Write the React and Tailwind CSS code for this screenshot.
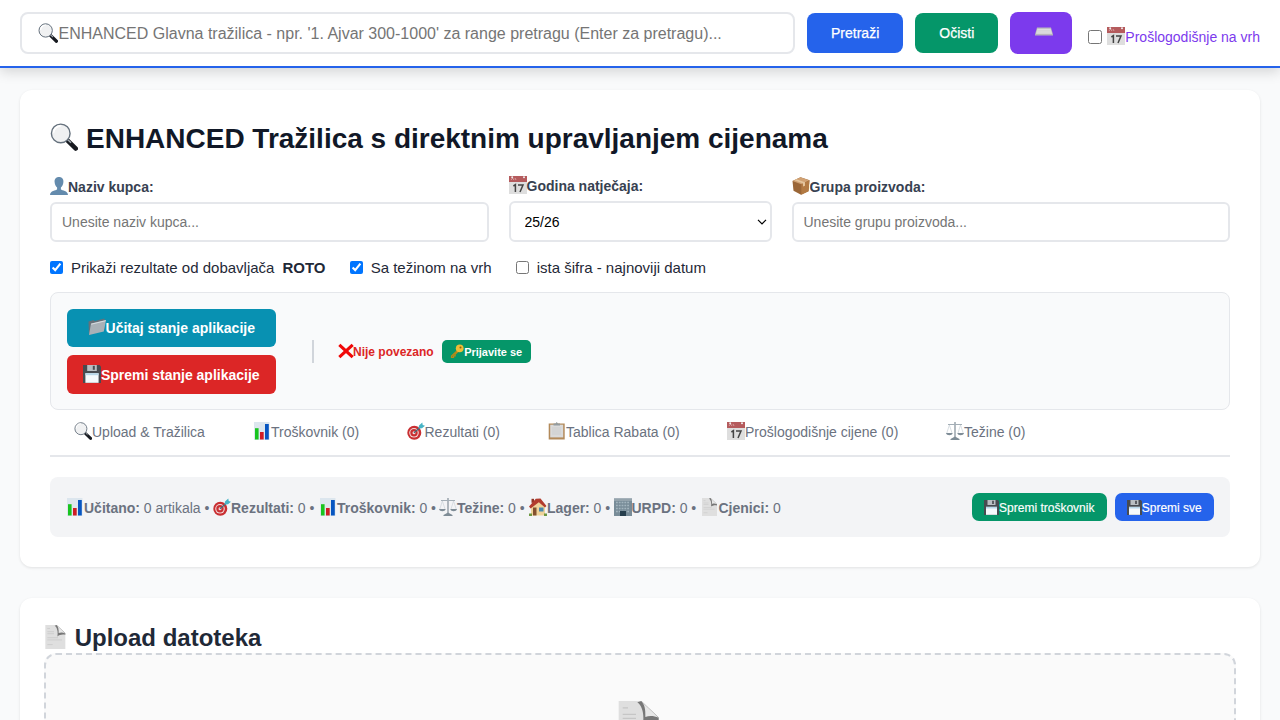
import React from "react";

const art = {
  search: (
    <>
      <path d="M11.2 11.2 16.6 16.4" stroke="#171a20" strokeWidth="2.9" strokeLinecap="round" />
      <path d="m11.5 10.8 2 1.9" stroke="#a6adb4" strokeWidth="1" />
      <circle cx="6.9" cy="6.7" r="6" fill="#f0f1f2" stroke="#65717d" strokeWidth=".9" />
      <path d="M2.3 6.3a4.6 4.6 0 0 1 4.6-4.5" stroke="#fff" strokeWidth="1.1" fill="none" />
    </>
  ),
  calendar: (
    <>
      <path d="M0 0h18v18H0z" fill="#dedede" />
      <path d="M0 0h18v6H0z" fill="#b55b5d" />
      <path d="m2 4 1.5-2L5 4m1-2 1 2" stroke="#e5b6b6" strokeWidth=".7" fill="none" />
      <circle cx="3.2" cy="1.2" r="1" fill="#eee" />
      <circle cx="15" cy="1.2" r="1" fill="#eee" />
      <path d="m4.4 10 2-1.3V16M9 9h5l-3 7" stroke="#444" strokeWidth="1.5" fill="none" />
    </>
  ),
  user: (
    <path d="M9 0C5.9 0 4.3 2.2 4.6 5c.2 2.4 1.1 4.2 2.5 5.4v2C5.9 13.4.2 13.5 0 18h18c-.2-4.5-5.9-4.6-7.100-5.600v-2C12.300 9.200 13.200 7.400 13.400 5 13.700 2.200 12.100 0 9 0Z" fill="#648bad" />
  ),
  box: (
    <>
      <path d="m.5 4 8-3.700 9 3-1 11-7.500 3.500-7.500-4z" fill="#9a6637" />
      <path d="m.5 4 8-3.700 9 3-8.200 4z" fill="#d0a173" />
      <path d="m9.300 7.300 8.200-4-1 11-7.200 3.500z" fill="#b37a43" />
      <path d="m4.200 2.300 8.800 3v3.500l-2 .8V6.500L2.400 3.300z" fill="#e4c49c" />
    </>
  ),
  folder: (
    <>
      <path d="M.5 3.500 5.500 2l1.200 1L16.500.5 17 11 1 17z" fill="#66717a" />
      <path d="M3 5.600 18 2 15.800 13.500 1 17z" fill="#a9b1b7" />
      <path d="m3.200 6.200 14.500-3.500" stroke="#e4e9ec" strokeWidth=".8" />
    </>
  ),
  save: (
    <>
      <path d="M0 0h16.500L18 1.500V18H0z" fill="#484b50" />
      <path d="M4.200 0h9.600v6H4.200z" fill="#b9bec2" />
      <path d="M9.800.8h2v4h-2z" fill="#484b50" />
      <path d="M2.400 8.200h13.200v9.600H2.400z" fill="#f5f9fc" />
      <path d="M2.400 8.200h13.200v2H2.400z" fill="#b8d7e9" />
    </>
  ),
  cross: <path d="m1.500 2 15 14m0-14-15 14" stroke="#f00808" strokeWidth="3.500" fill="none" />,
  key: (
    <>
      <path d="M10 8 2 15.500v1.800h2.500v-2h2v-2l5-4.500" stroke="#b88a18" strokeWidth="1.700" fill="none" />
      <circle cx="12.500" cy="5.500" r="5" fill="#edbd37" />
      <circle cx="13.500" cy="4.400" r="1.300" fill="#8a6412" />
    </>
  ),
  chart: (
    <>
      <path d="M1 0h15.500v18H1z" fill="#dce6ee" />
      <path d="M2 6.200h3.600v11.300H2z" fill="#18c41f" />
      <path d="M7 10h3.700v7.500H7z" fill="#cf1d25" />
      <path d="M12 2h3.800v15.500H12z" fill="#0655c1" />
    </>
  ),
  target: (
    <>
      <circle cx="7.300" cy="10.700" r="7" fill="#c92f32" />
      <circle cx="7" cy="10.800" r="4.800" fill="#f3dada" />
      <circle cx="7" cy="10.800" r="3.700" fill="#c92f32" />
      <circle cx="7" cy="10.800" r="1.500" fill="#f3dada" />
      <path d="m7 10.800 7-6" stroke="#466a78" strokeWidth="1.200" />
      <path d="m11.500 6.400.5-3L15.300.5l.4 2.500 2.300.7-3 2.600z" fill="#47b4c6" />
    </>
  ),
  clipboard: (
    <>
      <path d="M.7 1.500h16v16H.7z" fill="#b38a5a" />
      <path d="M2.200 2.700h13v12.700h-13z" fill="#dadada" />
      <path d="M4 6h9m-9 2h9m-9 2h9m-9 2h9" stroke="#c7c8c9" strokeWidth=".7" />
      <path d="M5.500 1.500h2l1.200-1.500 1.300 1.500h2V3.500H5.500z" fill="#949c9f" />
    </>
  ),
  scales: (
    <>
      <path d="M9 0v16" stroke="#8a969f" strokeWidth="1.300" />
      <path d="M2 2.500h14" stroke="#a3aeb6" strokeWidth="1" />
      <path d="M3.400 3 .8 11m2.600-8L6 11m8.500-8L12 11m2.500-8 2.700 8" stroke="#ccd3d8" strokeWidth=".7" fill="none" />
      <path d="M0 11h6.700c-.5 3-6.200 3-6.700 0Zm11.300 0H18c-.5 3-6.200 3-6.700 0ZM4.500 17 9 14.500l4.500 2.500v1h-9z" fill="#7e8c96" />
    </>
  ),
  house: (
    <>
      <path d="M2 8 8 3l8 5v9.500H2z" fill="#efd39b" />
      <path d="M2.500.8H5v4H2.500z" fill="#8f3427" />
      <path d="M0 8.500 6.800.8l4.700-.3L17.500 8 16 9.500l-6.200-5.300L1.600 10.500z" fill="#b23c2e" />
      <path d="M4 9.500h3.500v8H4z" fill="#82502f" />
      <path d="M10 9.500h4.500v4H10z" fill="#488aae" />
      <path d="M0 15.500h3V18H0zm15 0h3V18h-3z" fill="#6d9841" />
    </>
  ),
  building: (
    <>
      <path d="M0 .5h18V18H0z" fill="#788c98" />
      <path d="M0 .5h18V3H0z" fill="#94a3ac" />
      <path d="M2 4.500h14M2 7.500h14M2 10.500h14M2 13.500h14" stroke="#a3b5be" strokeWidth="1.300" strokeDasharray="1.800 1" />
      <path d="M6 13h6v5H6z" fill="#263e4c" />
    </>
  ),
  page: (
    <>
      <path d="M1 0h8.500l6.500 6.200V18H1z" fill="#dfdfdf" />
      <path d="M2.500 2.600h2M2.500 5h5M2.500 6.500h5M2.500 9.500h8M2.500 11.200h11M2.500 14.700h4" stroke="#c6c6c6" strokeWidth=".5" />
      <path d="M8 .5c2 1.500 2.600 4.600 2.100 8.100C11.500 7.300 14 6.800 16 7.400V6.200L9.500 0z" fill="#777" />
      <path d="M9.400 0 16 6.300c-1.700-.8-3.500-.9-5-.3.100-2.800-.2-4.700-1.600-6Z" fill="#e7e7e7" />
    </>
  ),
  keyboard: (
    <>
      <path d="M2 4.500h14l2 7v1H0v-1z" fill="#b7b5bb" />
      <path d="M2.400 5.700h13.200l1.500 5H1z" fill="#e0dfe1" />
      <path d="M2.200 7.300h13.600M1.700 9h14.600" stroke="#c8c6cc" strokeWidth=".5" />
    </>
  ),
};

function Icon({ name, className = "-mt-[2px] h-[18px] w-[18px]" }) {
  return (
    <svg viewBox="0 0 18 18" fill="none" className={`block shrink-0 ${className}`} aria-hidden="true">
      {art[name]}
    </svg>
  );
}

function Field({ icon, label, placeholder, id }) {
  return (
    <div className="w-[438.500px]">
      <label htmlFor={id} className="flex h-[25px] items-center text-[14px] font-bold text-[#374151]">
        <Icon name={icon} /><span>{label}</span>
      </label>
      <input id={id} placeholder={placeholder} className="mt-[2px] block h-10 w-full rounded-md border-2 border-[#e5e7eb] px-[10px] pt-px text-[14px] placeholder:text-[#757575]" />
    </div>
  );
}

const tabs = [
  ["search", "Upload & Tražilica", "w-[179px]"],
  ["chart", "Troškovnik (0)", "w-[153.500px]"],
  ["target", "Rezultati (0)", "w-[141.500px]"],
  ["clipboard", "Tablica Rabata (0)", "w-[179px]"],
  ["calendar", "Prošlogodišnje cijene (0)", "w-[219px]"],
  ["scales", "Težine (0)", "w-[100px]"],
];

const stats = [
  ["chart", "Učitano:", "0 artikala •", "w-[147px]"],
  ["target", "Rezultati:", "0 •", "w-[106px]"],
  ["chart", "Troškovnik:", "0 •", "w-[120px]"],
  ["scales", "Težine:", "0 •", "w-[90px]"],
  ["house", "Lager:", "0 •", "w-[84.500px]"],
  ["building", "URPD:", "0 •", "w-[87px]"],
  ["page", "Cjenici:", "0", "w-[85px]"],
];

export default function App() {
  return (
    <div className="h-[720px] overflow-hidden bg-[#f9fafb] font-['Liberation_Sans',Arial,sans-serif] text-[#1f2937]">
      <header className="flex h-[68.400px] items-start border-b-2 border-[#2563eb] bg-white px-5 pt-3 shadow-[0_4px_12px_rgba(0,0,0,0.15)]">
        <label className="flex h-[42px] w-[775px] items-center rounded-lg border-2 border-[#e5e7eb] pl-4">
          <Icon name="search" className="h-5 w-5" />
          <input aria-label="Pretraga" className="min-w-0 flex-1 pl-[0.500px] pt-[2px] text-[16px] outline-none placeholder:text-[#757575]" placeholder="ENHANCED Glavna tražilica - npr. '1. Ajvar 300-1000' za range pretragu (Enter za pretragu)..." />
        </label>
        <button className="ml-3 mt-[1.300px] h-10 w-[96.500px] rounded-lg bg-[#2563eb] text-[14px] text-white [-webkit-text-stroke:0.25px_white]">Pretraži</button>
        <button className="ml-3 mt-[1.300px] h-10 w-[83px] rounded-lg bg-[#059669] text-[14px] text-white [-webkit-text-stroke:0.25px_white]">Očisti</button>
        <button aria-label="Tipkovnica" className="ml-3 flex h-[42px] w-[62px] items-center justify-center rounded-lg bg-[#7c3aed] pl-[6px]">
          <Icon name="keyboard" className="-mt-[2px] h-[18px] w-[18px]" />
        </button>
        <label className="ml-4 mt-[16px] flex h-[18px] shrink-0 items-center text-[14px] text-[#7c3aed]">
          <input type="checkbox" className="mr-[5px] h-[14px] w-[14px]" />
          <Icon name="calendar" />
          <span className="whitespace-nowrap">Prošlogodišnje na vrh</span>
        </label>
      </header>

      <main className="px-5 pt-[21.600px]">
        <section className="h-[477.500px] rounded-xl bg-white px-[30px] pt-[30px] shadow-[0_1px_3px_rgba(0,0,0,0.1)]">
          <h1 className="flex h-9 items-center text-[28px] font-bold text-[#111827]">
            <Icon name="search" className="-mt-[2px] mr-2 h-7 w-7" />
            <span className="mt-[2px] tracking-[-0.01px]">ENHANCED Tražilica s direktnim upravljanjem cijenama</span>
          </h1>

          <div className="mt-[18px] flex h-[68.500px] gap-5">
            <div className="pt-[1px]"><Field id="kupac" icon="user" label="Naziv kupca:" placeholder="Unesite naziv kupca..." /></div>
            <div className="w-[263px]">
              <label htmlFor="godina" className="flex h-[25px] items-center text-[14px] font-bold text-[#374151]">
                <Icon name="calendar" /><span>Godina natječaja:</span>
              </label>
              <div className="mt-[2.400px] grid items-center">
                <select id="godina" className="col-start-1 row-start-1 h-[41px] w-full appearance-none rounded-md border-2 border-[#e5e7eb] bg-white px-[14px] pt-px text-[14px] text-black">
                  <option>25/26</option>
                </select>
                <svg viewBox="0 0 10 6" className="pointer-events-none col-start-1 row-start-1 mr-[5px] h-[6px] w-[10px] justify-self-end" fill="none"><path d="m1 .8 4 4 4-4" stroke="black" strokeWidth="1.200" /></svg>
              </div>
            </div>
            <div className="pt-[1px]"><Field id="grupa" icon="box" label="Grupa proizvoda:" placeholder="Unesite grupu proizvoda..." /></div>
          </div>

          <div className="mt-[16px] flex h-[19px] items-center text-[15px]">
            <label className="flex w-[299.700px] items-center"><input type="checkbox" defaultChecked className="-mt-px mr-2 h-[13px] w-[13px]" />Prikaži rezultate od dobavljača <strong className="ml-2">ROTO</strong></label>
            <label className="flex w-[166px] items-center"><input type="checkbox" defaultChecked className="-mt-px mr-2 h-[13px] w-[13px]" />Sa težinom na vrh</label>
            <label className="flex items-center"><input type="checkbox" className="-mt-px mr-2 h-[13px] w-[13px]" />ista šifra - najnoviji datum</label>
          </div>

          <div className="mt-[14.400px] flex h-[118.500px] items-center rounded-lg border border-[#e5e7eb] bg-[#f9fafb] px-4">
            <div className="flex w-[208.500px] flex-col gap-2">
              <button className="flex h-[38.500px] items-center justify-center rounded-md bg-[#0891b2] text-[14px] font-bold text-white"><Icon name="folder" /><span className="mt-[1.500px]">Učitaj stanje aplikacije</span></button>
              <button className="flex h-[38.500px] items-center justify-center rounded-md bg-[#dc2626] text-[14px] font-bold text-white"><Icon name="save" className="h-[18px] w-[18px]" /><span className="mt-[1.500px]">Spremi stanje aplikacije</span></button>
            </div>
            <div className="ml-9 h-[23px] w-[2px] bg-[#d1d5db]" />
            <div className="ml-6 flex items-center text-[12px] font-bold text-[#dc2626]"><Icon name="cross" className="h-4 w-4" /><span className="-ml-[0.500px] mt-[1.500px]">Nije povezano</span></div>
            <button className="ml-2 flex h-[23px] w-[89px] items-center justify-center rounded-[5px] bg-[#059669] text-[11px] font-bold text-white"><Icon name="key" className="h-[14px] w-[14px]" /><span className="mt-[1.500px]">Prijavite se</span></button>
          </div>

          <nav className="flex h-[47px] border-b-2 border-[#e5e7eb] pl-6 pt-[12px] text-[14px] text-[#6b7280]">
            {tabs.map(([icon, label, width]) => (
              <button key={label} className={`flex h-[19px] shrink-0 items-center ${width}`}><Icon name={icon} /><span className="mt-[1.500px]">{label}</span></button>
            ))}
          </nav>

          <div className="mt-[19.700px] flex h-[60px] items-center rounded-lg bg-[#f3f4f6] px-4 text-[14px] text-[#6b7280]">
            {stats.map(([icon, label, value, width]) => (
              <div key={label} className={`flex h-[22px] shrink-0 items-center pt-px ${width}`}><Icon name={icon} /><strong className="mt-[1.500px]">{label}</strong><span className="ml-[3.800px] mt-[1.500px]">{value}</span></div>
            ))}
            <button className="ml-auto flex h-7 w-[134.500px] items-center justify-center rounded-[7px] bg-[#059669] text-[12px] text-white [-webkit-text-stroke:0.15px_white]"><Icon name="save" className="h-[15px] w-[15px]" /><span className="mt-[1.500px]">Spremi troškovnik</span></button>
            <button className="ml-2 flex h-7 w-[99.500px] items-center justify-center rounded-[7px] bg-[#2563eb] text-[12px] text-white [-webkit-text-stroke:0.15px_white]"><Icon name="save" className="h-[15px] w-[15px]" /><span className="mt-[1.500px]">Spremi sve</span></button>
          </div>
        </section>

        <section className="mt-[30.500px] h-[400px] rounded-xl bg-white px-6 pt-6 shadow-[0_1px_3px_rgba(0,0,0,0.1)]">
          <h2 className="flex h-[31px] items-center text-[24px] font-bold"><Icon name="page" className="mr-[6.700px] h-6 w-6" /><span className="mt-[1.500px]">Upload datoteka</span></h2>
          <div className="flex h-[300px] justify-center rounded-xl border-2 border-dashed border-[#d1d5db] bg-[#fafafa] pt-[46px]">
            <Icon name="page" className="h-12 w-12" />
          </div>
        </section>
      </main>
    </div>
  );
}
